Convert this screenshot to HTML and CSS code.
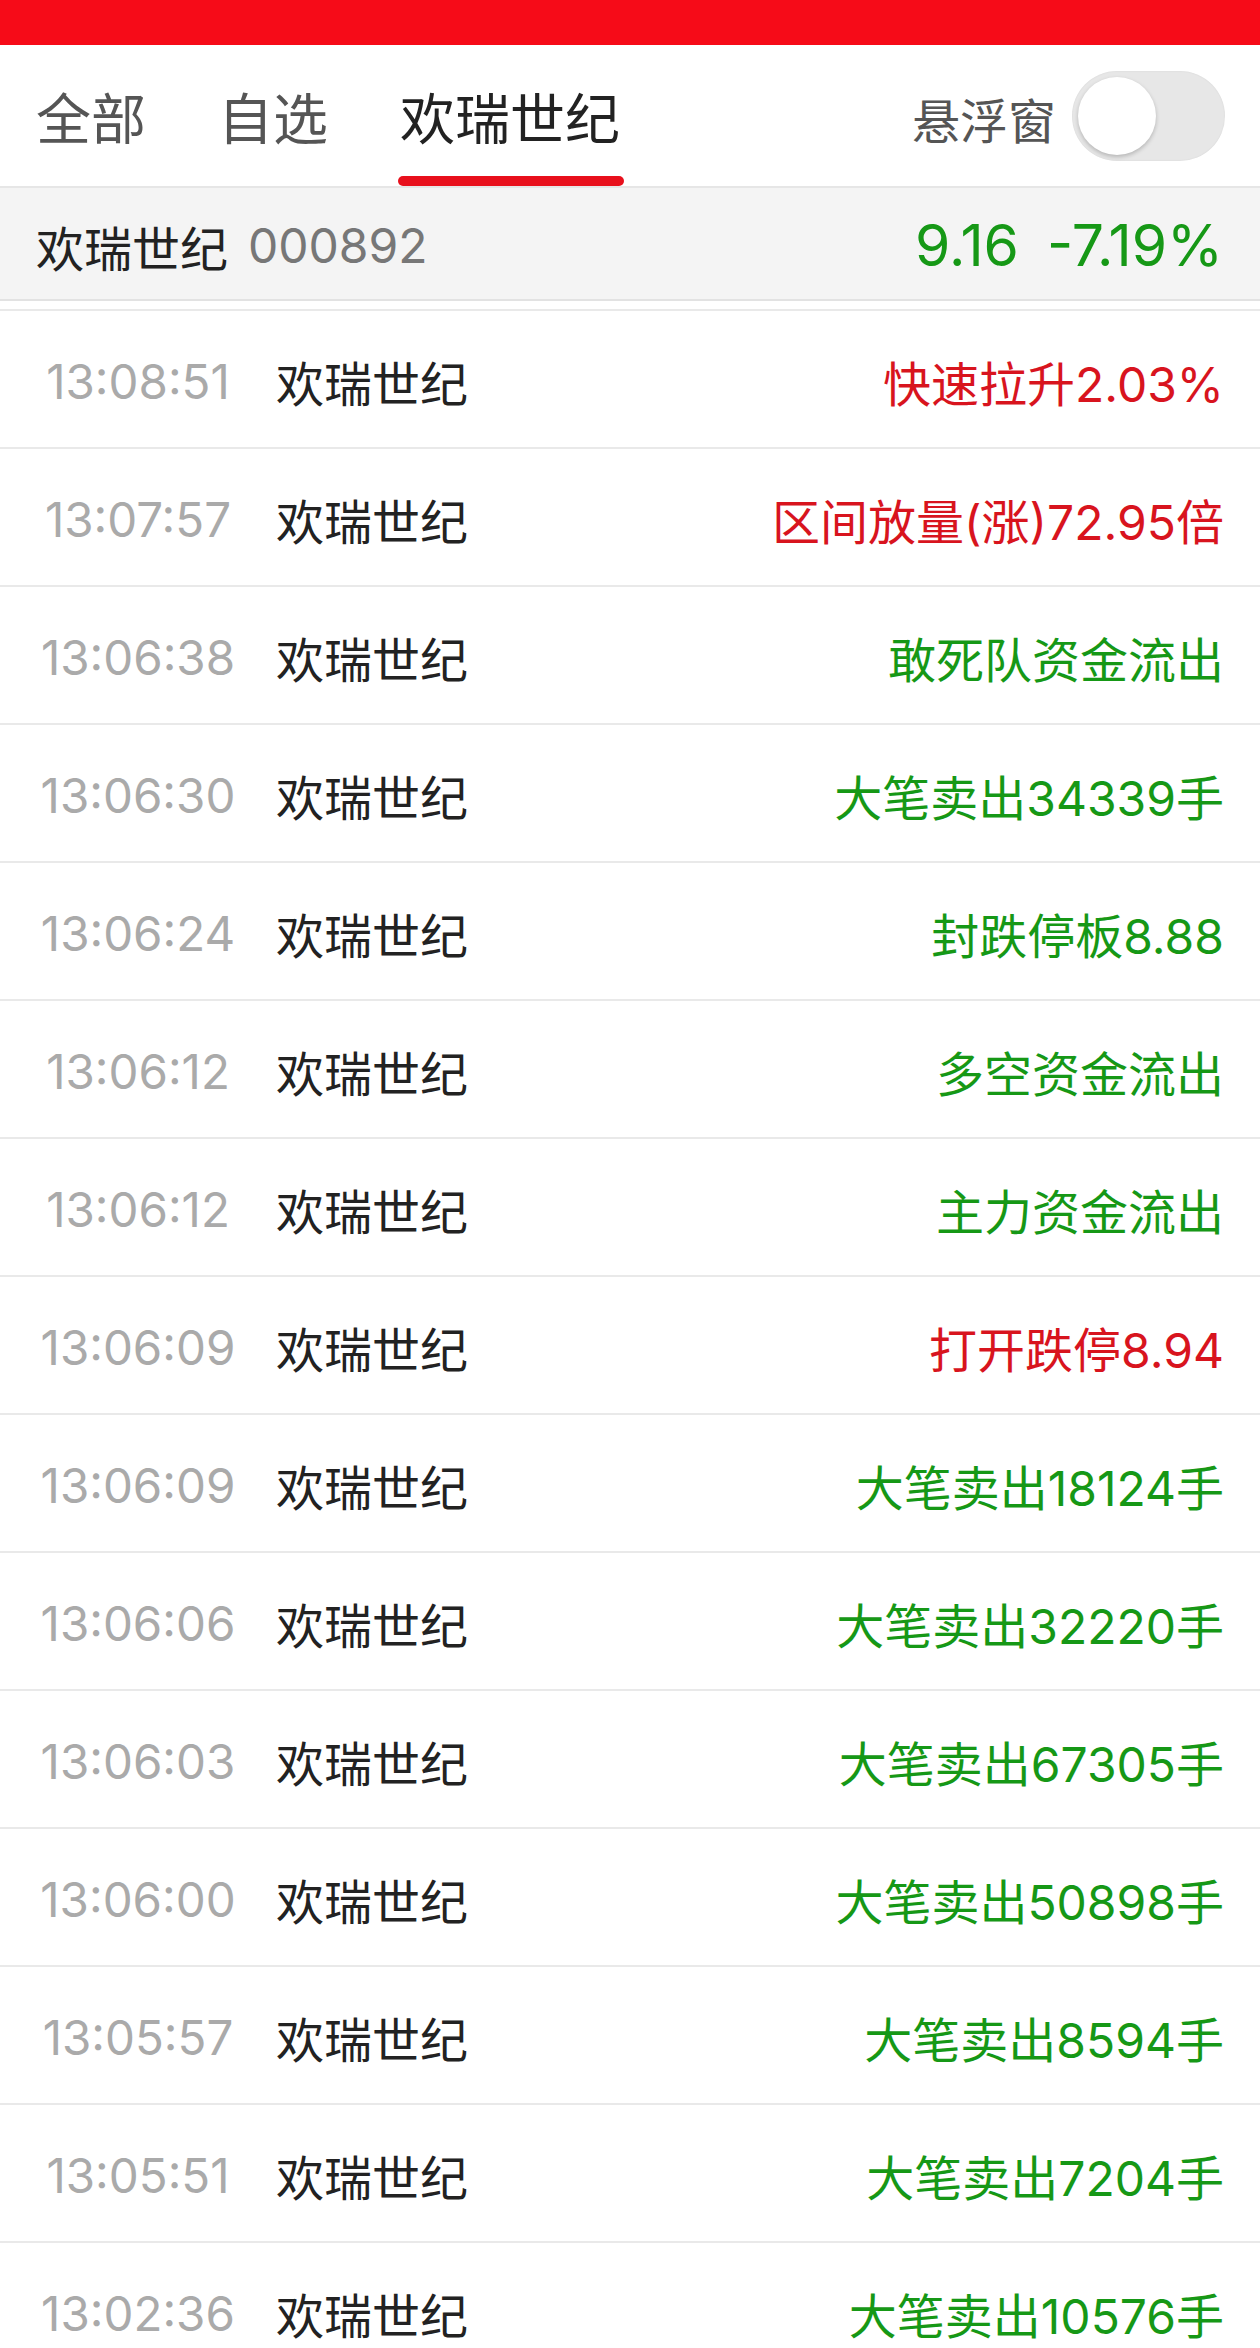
FILE: index.html
```html
<!DOCTYPE html>
<html lang="zh-CN">
<head>
<meta charset="utf-8">
<title>欢瑞世纪 异动</title>
<link rel="stylesheet" href="styles.css">
</head>
<body>
<div class="statusbar"></div>
<div class="tabs">
  <div class="tab">全部</div>
  <div class="tab">自选</div>
  <div class="tab active">欢瑞世纪</div>
  <div class="spacer"></div>
  <div class="float-label">悬浮窗</div>
  <div class="toggle"><div class="knob"></div></div>
</div>
<div class="quote">
  <div class="q-name">欢瑞世纪</div>
  <div class="q-code">000892</div>
  <div class="spacer"></div>
  <div class="q-price">9.16</div>
  <div class="q-chg">-7.19%</div>
</div>
<div class="list">
  <div class="row"><div class="time">13:08:51</div><div class="name">欢瑞世纪</div><div class="event up">快速拉升2.03%</div></div>
  <div class="row"><div class="time">13:07:57</div><div class="name">欢瑞世纪</div><div class="event up">区间放量(涨)72.95倍</div></div>
  <div class="row"><div class="time">13:06:38</div><div class="name">欢瑞世纪</div><div class="event down">敢死队资金流出</div></div>
  <div class="row"><div class="time">13:06:30</div><div class="name">欢瑞世纪</div><div class="event down">大笔卖出34339手</div></div>
  <div class="row"><div class="time">13:06:24</div><div class="name">欢瑞世纪</div><div class="event down">封跌停板8.88</div></div>
  <div class="row"><div class="time">13:06:12</div><div class="name">欢瑞世纪</div><div class="event down">多空资金流出</div></div>
  <div class="row"><div class="time">13:06:12</div><div class="name">欢瑞世纪</div><div class="event down">主力资金流出</div></div>
  <div class="row"><div class="time">13:06:09</div><div class="name">欢瑞世纪</div><div class="event up">打开跌停8.94</div></div>
  <div class="row"><div class="time">13:06:09</div><div class="name">欢瑞世纪</div><div class="event down">大笔卖出18124手</div></div>
  <div class="row"><div class="time">13:06:06</div><div class="name">欢瑞世纪</div><div class="event down">大笔卖出32220手</div></div>
  <div class="row"><div class="time">13:06:03</div><div class="name">欢瑞世纪</div><div class="event down">大笔卖出67305手</div></div>
  <div class="row"><div class="time">13:06:00</div><div class="name">欢瑞世纪</div><div class="event down">大笔卖出50898手</div></div>
  <div class="row"><div class="time">13:05:57</div><div class="name">欢瑞世纪</div><div class="event down">大笔卖出8594手</div></div>
  <div class="row"><div class="time">13:05:51</div><div class="name">欢瑞世纪</div><div class="event down">大笔卖出7204手</div></div>
  <div class="row"><div class="time">13:02:36</div><div class="name">欢瑞世纪</div><div class="event down">大笔卖出10576手</div></div>
</div>
</body>
</html>
```
FILE: styles.css
```css
html, body {
  margin: 0;
  padding: 0;
  background: #ffffff;
}
body {
  width: 1260px;
  font-family: "Inter", "Noto Sans CJK SC", sans-serif;
  color: #222222;
  overflow: hidden;
}
.statusbar {
  height: 45px;
  background: #f60b18;
}
.tabs {
  height: 141px;
  border-bottom: 2px solid #e6e6e6;
  display: flex;
  align-items: center;
  padding: 0 35px 0 36px;
  box-sizing: content-box;
}
.tab {
  position: relative;
  font-size: 55px;
  line-height: 141px;
  height: 141px;
  color: #555555;
  margin-right: 72px;
  padding-top: 4px;
  box-sizing: border-box;
}
.tab.active {
  color: #222222;
}
.tab.active::after {
  content: "";
  position: absolute;
  left: -2px;
  right: -4px;
  bottom: 0;
  height: 10px;
  border-radius: 5px;
  background: #e8101c;
}
.spacer {
  flex: 1;
}
.float-label {
  font-size: 48px;
  color: #555555;
  margin-right: 16px;
  padding-top: 4px;
}
.toggle {
  width: 153px;
  height: 90px;
  border-radius: 45px;
  background: #e7e7e7;
  box-shadow: inset 0 0 2px rgba(0, 0, 0, 0.08);
  display: flex;
  align-items: center;
  padding-left: 6px;
  box-sizing: border-box;
}
.knob {
  width: 78px;
  height: 78px;
  border-radius: 50%;
  background: #ffffff;
  box-shadow: 0 2px 4px rgba(0, 0, 0, 0.22);
}
.quote {
  height: 111px;
  background: #f4f4f4;
  border-bottom: 2px solid #e2e2e2;
  display: flex;
  align-items: center;
  padding: 0 37px 0 36px;
}
.q-name {
  font-size: 48px;
  color: #222222;
  padding-top: 4px;
}
.q-code {
  font-size: 48px;
  color: #777777;
  margin-left: 20px;
  padding-top: 4px;
}
.q-price, .q-chg {
  font-size: 57px;
  color: #169816;
  padding-top: 4px;
}
.q-chg {
  margin-left: 28px;
}
.list {
  margin-top: 8px;
  border-top: 2px solid #e9e9e9;
}
.row {
  height: 136px;
  border-bottom: 2px solid #e9e9e9;
  display: grid;
  grid-template-columns: 200px auto 1fr;
  align-items: center;
  padding: 0 36px 0 38px;
}
.time {
  font-size: 47.5px;
  color: #aaaaaa;
  text-align: center;
  padding-top: 4px;
}
.name {
  font-size: 48px;
  color: #222222;
  margin-left: 38px;
  padding-top: 4px;
}
.event {
  font-size: 48px;
  text-align: right;
  padding-top: 4px;
}
.event.up {
  color: #d8141e;
}
.event.down {
  color: #169816;
}
```
